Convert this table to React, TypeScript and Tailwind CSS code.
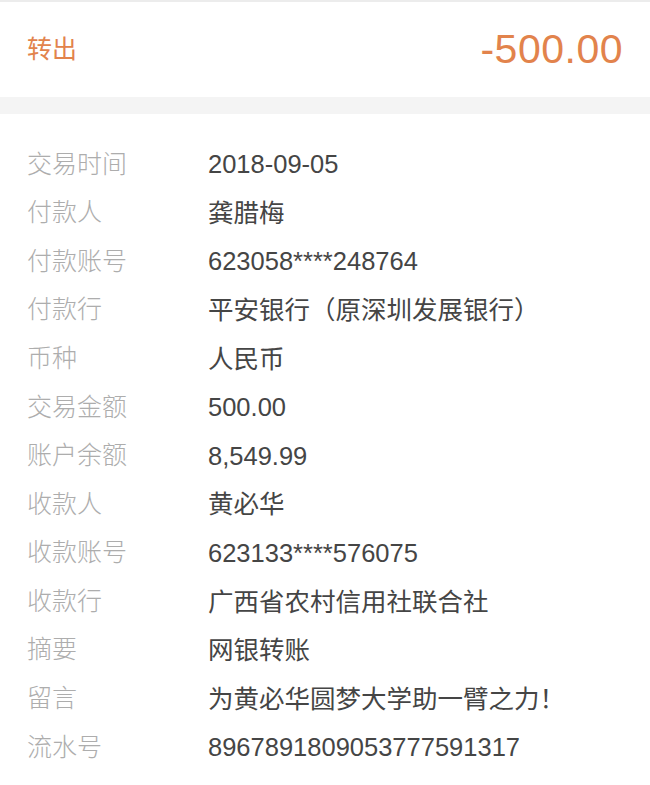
const rows: [string, string][] = [
  ['交易时间', '2018-09-05'],
  ['付款人', '龚腊梅'],
  ['付款账号', '623058****248764'],
  ['付款行', '平安银行（原深圳发展银行）'],
  ['币种', '人民币'],
  ['交易金额', '500.00'],
  ['账户余额', '8,549.99'],
  ['收款人', '黄必华'],
  ['收款账号', '623133****576075'],
  ['收款行', '广西省农村信用社联合社'],
  ['摘要', '网银转账'],
  ['留言', '为黄必华圆梦大学助一臂之力！'],
  ['流水号', '8967891809053777591317'],
];

export default function App() {
  return (
    <div
      className="w-[650px] h-[785px] bg-white overflow-hidden"
      style={{ fontFamily: '"Liberation Sans", "Noto Sans CJK SC", sans-serif' }}
    >
      <div className="h-[2px] bg-[#ececec]" />
      <div className="h-[95px] flex items-center justify-between px-[27px]">
        <span className="text-[25px] text-[#e2834c]">转出</span>
        <span className="text-[41px] text-[#e2834c] tracking-[0.5px]">-500.00</span>
      </div>
      <div className="h-[17px] bg-[#f4f4f4]" />
      <div className="pt-[26px]">
        {rows.map(([label, value]) => (
          <div key={label} className="h-[48.6px] flex items-center">
            <span className="w-[208px] shrink-0 pl-[27px] text-[25px] text-[#adadad] font-light">{label}</span>
            <span className="text-[25.5px] text-[#454545]">{value}</span>
          </div>
        ))}
      </div>
    </div>
  );
}
